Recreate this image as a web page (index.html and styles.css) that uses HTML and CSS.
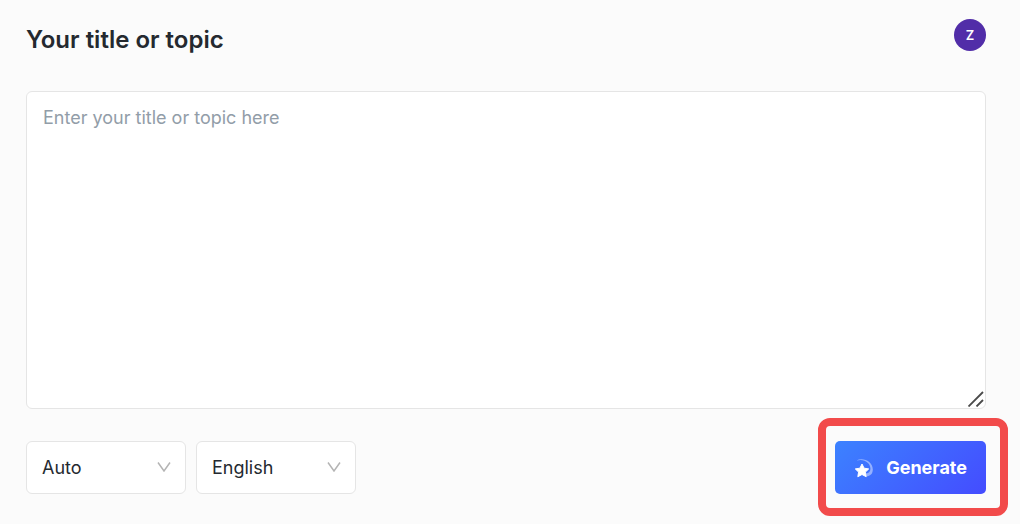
FILE: index.html
```
<!DOCTYPE html>
<html lang="en">
<head>
    <meta charset="UTF-8">
    <meta name="viewport" content="width=device-width, initial-scale=1.0">
    <title>Your title or topic</title>
    <link rel="stylesheet" href="styles.css">
</head>
<body>
    <div class="container">
        <header class="header">
            <h1><label for="topic">Your title or topic</label></h1>
            <button type="button" class="avatar">Z</button>
        </header>

        <form class="topic-form">
            <div class="topic-field">
                <textarea id="topic" placeholder="Enter your title or topic here"></textarea>
                <svg class="resize-handle" viewBox="0 0 16 16" aria-hidden="true">
                    <path d="M.5 15.5L15 1M8.500 15.5L15 9" fill="none" stroke="#4a4a4a" stroke-width="1.8"/>
                </svg>
            </div>

            <div class="actions">
                <div class="select-box">
                    <select id="tone" aria-label="Tone">
                        <option>Auto</option>
                        <option>Formal</option>
                    </select>
                    <svg class="arrow" viewBox="0 0 14 10" aria-hidden="true">
                        <path d="M1 .5L7 9L13 .5" fill="none" stroke="#b4b4b4" stroke-width="1.5"/>
                    </svg>
                </div>
                <div class="select-box">
                    <select id="language" aria-label="Language">
                        <option>English</option>
                        <option>Spanish</option>
                    </select>
                    <svg class="arrow" viewBox="0 0 14 10" aria-hidden="true">
                        <path d="M1 .5L7 9L13 .5" fill="none" stroke="#b4b4b4" stroke-width="1.5"/>
                    </svg>
                </div>

                <div class="highlight">
                    <button type="submit" class="generate-btn">
                        <svg class="star" viewBox="0 0 20 20" aria-hidden="true">
                            <path d="M2.500 2.500C9-1 18.800 3.500 18.800 11.500C18.800 16 16 18.300 12.500 18.300L12 15.500C17.500 15 17.500 8.500 14 5C11 2 7 1.200 2.500 2.500Z" fill="#fff" fill-opacity=".45"/>
                            <path d="M8 6L10.100 10.200L14.700 10.900L11.400 14.100L12.200 18.700L8 16.500L3.800 18.700L4.600 14.100L1.300 10.900L5.900 10.200Z" fill="#fff" stroke="#fff" stroke-width="1" stroke-linejoin="round"/>
                        </svg>
                        Generate
                    </button>
                </div>
            </div>
        </form>
    </div>
</body>
</html>
```
FILE: styles.css
```
* {
    box-sizing: border-box;
}

body {
    font-family: Inter, sans-serif;
    margin: 0;
    background-color: #fbfbfb;
    color: #24292f;
}

.container {
    padding: 19px 34px 30px 26px;
}

/* Header */
.header {
    display: flex;
    justify-content: space-between;
    align-items: flex-start;
    margin-bottom: 30px;
}

h1 {
    margin: 0;
    font-size: 24px;
    line-height: 42px;
    font-weight: 600;
}

.avatar {
    width: 32px;
    height: 32px;
    padding: 0;
    border: none;
    border-radius: 50%;
    background-color: #512da8;
    color: #fff;
    font: 600 13px Inter, sans-serif;
}

/* Topic field */
.topic-field {
    position: relative;
    margin-bottom: 32px;
}

textarea {
    display: block;
    width: 100%;
    height: 318px;
    padding: 12px 16px;
    border: 1px solid #e5e5e5;
    border-radius: 6px;
    background-color: #fff;
    color: #24292f;
    font: 18px/28px Inter, sans-serif;
    resize: none;
}

textarea::placeholder {
    color: #929da8;
}

.resize-handle {
    position: absolute;
    right: 2px;
    bottom: 2px;
    width: 16px;
    height: 16px;
}

/* Bottom row */
.actions {
    display: flex;
    gap: 10px;
}

.select-box {
    position: relative;
}

select {
    display: block;
    width: 160px;
    height: 53px;
    padding: 0 15px;
    border: 1px solid #e5e5e5;
    border-radius: 6px;
    background-color: #fff;
    color: #24292f;
    font: 18px Inter, sans-serif;
    appearance: none;
}

.arrow {
    position: absolute;
    top: 21px;
    right: 15px;
    width: 14px;
    height: 10px;
    pointer-events: none;
}

.highlight {
    position: relative;
    margin-left: auto;
}

.highlight::after {
    content: "";
    position: absolute;
    inset: -23px -22px -22px -17px;
    border: 8px solid #f24b4b;
    border-radius: 12px;
    pointer-events: none;
}

.generate-btn {
    display: flex;
    align-items: center;
    gap: 12px;
    height: 53px;
    padding: 0 19px;
    border: none;
    border-radius: 5px;
    background: linear-gradient(135deg, #3c82ff, #444cff);
    color: #fff;
    font: 700 18px Inter, sans-serif;
    cursor: pointer;
}

.star {
    width: 20px;
    height: 20px;
}
```
